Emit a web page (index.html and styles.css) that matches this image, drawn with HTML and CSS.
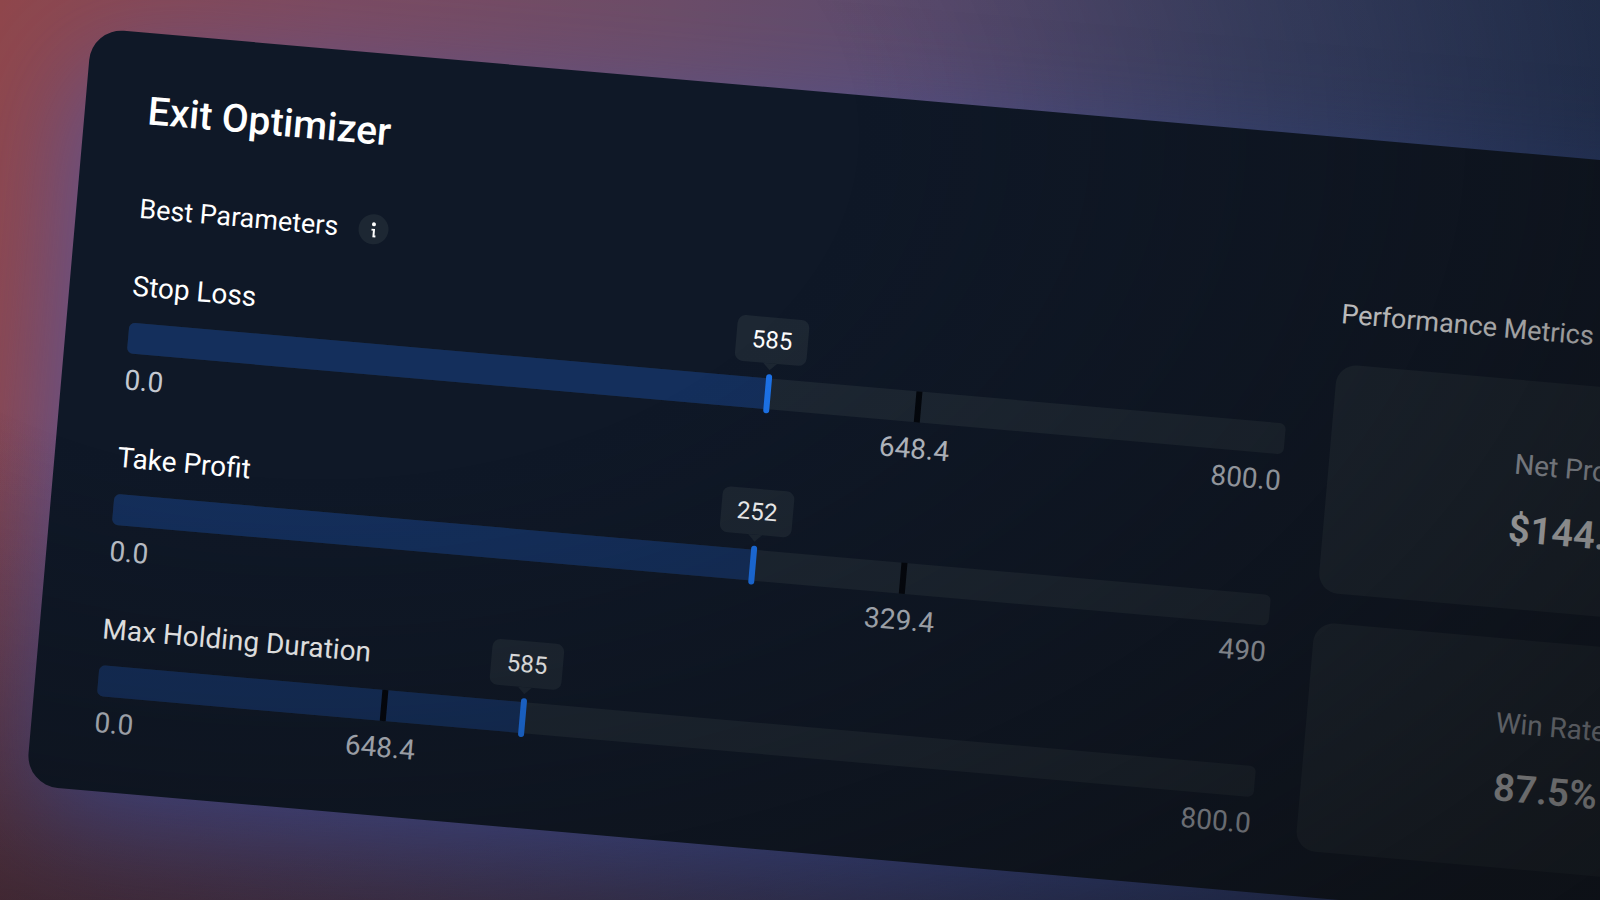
FILE: index.html
```html
<!doctype html>
<html lang="en">
<head>
  <meta charset="utf-8">
  <title>Exit Optimizer</title>
  <link rel="stylesheet" href="styles.css">
</head>
<body>
<main class="panel">
  <h1>Exit Optimizer</h1>
  <div class="columns">
    <section class="params">
      <div class="section-head">
        <h2>Best Parameters</h2>
        <button class="info" type="button" aria-label="About best parameters">
          <svg viewBox="0 0 30 30" width="30" height="30" aria-hidden="true">
            <circle cx="15" cy="10" r="2" fill="#fff"/>
            <path d="M13 15.500h2.500v6.500h2" fill="none" stroke="#fff" stroke-width="2"/>
          </svg>
        </button>
      </div>
      <div class="param">
        <h3>Stop Loss</h3>
        <div class="bar">
          <div class="fill" style="width:55.3%"></div>
          <div class="tick" style="left:68.3%"></div>
          <div class="marker" style="left:55.3%"><span class="tip">585</span></div>
        </div>
        <div class="scale"><span>0.0</span><span class="mid" style="left:68.3%">648.4</span><span>800.0</span></div>
      </div>
      <div class="param">
        <h3>Take Profit</h3>
        <div class="bar">
          <div class="fill" style="width:55.3%"></div>
          <div class="tick" style="left:68.3%"></div>
          <div class="marker" style="left:55.3%"><span class="tip">252</span></div>
        </div>
        <div class="scale"><span>0.0</span><span class="mid" style="left:68.3%">329.4</span><span>490</span></div>
      </div>
      <div class="param">
        <h3>Max Holding Duration</h3>
        <div class="bar">
          <div class="fill" style="width:36.7%"></div>
          <div class="tick" style="left:24.7%"></div>
          <div class="marker" style="left:36.7%"><span class="tip">585</span></div>
        </div>
        <div class="scale"><span>0.0</span><span class="mid" style="left:24.7%">648.4</span><span>800.0</span></div>
      </div>
    </section>
    <section class="metrics">
      <div class="section-head">
        <h2>Performance Metrics</h2>
      </div>
      <div class="card">
        <p>Net Profit</p>
        <strong>$144.6</strong>
      </div>
      <div class="card">
        <p>Win Rate</p>
        <strong>87.5%</strong>
      </div>
    </section>
  </div>
</main>
</body>
</html>
```
FILE: styles.css
```css
:root{--panel:#0f1827;--track:#1d2733;--fill:#142f5c;--accent:#1d74ec;--txt:#fff;--muted:#c3c8d1;}
*{box-sizing:border-box;margin:0;padding:0;}
body{font-family:Roboto,sans-serif;background:linear-gradient(180deg,rgba(40,36,60,0) 45%,rgba(40,36,60,.4) 100%),linear-gradient(95deg,#90474c 0%,#7d4b60 20%,#6c4d68 40%,#5b4c70 56%,#414870 75%,#2c4272 100%);color:var(--txt);min-height:100vh;overflow:hidden;}
/* vignette over the whole page */
body::after{content:"";position:fixed;inset:0;pointer-events:none;background:radial-gradient(ellipse 88% 100% at 20% 15%,rgba(13,14,16,0) 38%,rgba(13,14,16,.13) 55%,rgba(13,14,16,.28) 75%,rgba(13,14,16,.5) 100%,rgba(13,14,16,.64) 115%,rgba(13,14,16,.7) 130%);}
.panel{width:114vw;margin:28px 0 0 92px;padding:54px 57px 46px 63px;background:var(--panel);border-radius:32px;box-shadow:0 40px 110px rgba(60,90,190,.65);transform:rotate(5deg);transform-origin:0 0;}
h1{font-size:39px;line-height:48px;font-weight:500;}
h2,h3{font-size:28px;line-height:32px;font-weight:400;}
h2{font-size:27px;}
.columns{display:grid;grid-template-columns:7fr 3fr;gap:46px;margin-top:58px;}
.section-head{display:flex;align-items:center;gap:20px;height:32px;}
.info{width:30px;height:30px;border:0;border-radius:50%;background:var(--track);}
.info svg{display:block;}
/* parameter rows */
.param{height:172px;padding-top:46px;}
.param h3{margin-bottom:20px;}
.bar{position:relative;height:31px;border-radius:6px;background:var(--track);}
.fill{height:100%;border-radius:6px 0 0 6px;background:var(--fill);}
.tick{position:absolute;top:0;width:6px;height:100%;margin-left:-3px;background:#03060c;}
.marker{position:absolute;top:-4px;width:6px;height:39px;margin-left:-3px;border-radius:3px;background:var(--accent);}
.tip{position:absolute;bottom:50px;left:50%;transform:translateX(-50%);padding:0 16px;border-radius:8px;background:var(--track);font-size:24px;line-height:46px;}
.tip::after{content:"";position:absolute;top:100%;left:50%;margin-left:-7px;border:7px solid transparent;border-top-color:var(--track);border-bottom:0;}
.scale{position:relative;display:flex;justify-content:space-between;margin-top:11px;font-size:28px;line-height:32px;color:var(--muted);}
.mid{position:absolute;top:0;transform:translateX(-50%);}
/* metric cards */
.card{display:flex;flex-direction:column;align-items:center;justify-content:center;gap:24px;height:229px;margin-top:30px;padding:12px 8px 0 0;border-radius:20px;background:var(--track);}
.section-head + .card{margin-top:34px;}
.card p{font-size:28px;line-height:32px;color:var(--muted);}
.card strong{font-size:38px;line-height:48px;font-weight:600;}
```
